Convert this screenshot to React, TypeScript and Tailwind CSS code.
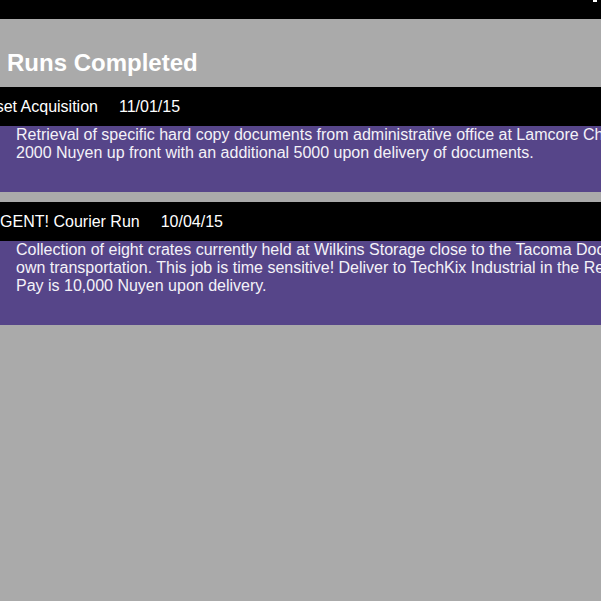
const runs = [
  {
    title: "Asset Acquisition",
    date: "11/01/15",
    lines: [
      "Retrieval of specific hard copy documents from administrative office at Lamcore Chemical.",
      "2000 Nuyen up front with an additional 5000 upon delivery of documents.",
    ],
  },
  {
    title: "URGENT! Courier Run",
    date: "10/04/15",
    lines: [
      "Collection of eight crates currently held at Wilkins Storage close to the Tacoma Docks. Provide your",
      "own transportation. This job is time sensitive! Deliver to TechKix Industrial in the Redmond Barrens.",
      "Pay is 10,000 Nuyen upon delivery.",
    ],
  },
];

function RunItem({ title, date, lines }: any) {
  return (
    <div className="mb-[10px]">
      <div className="flex h-[39px] items-center whitespace-nowrap bg-black text-[16px] leading-[18px]">
        <span className="-ml-[23px]">{title}</span>
        <span className="ml-[21px]">{date}</span>
      </div>
      <div className="whitespace-nowrap bg-[#564589] pb-[30px] pl-4 text-[16px] leading-[18px] text-[#f4f2f8]">
        {lines.map((l: string) => (
          <div key={l}>{l}</div>
        ))}
      </div>
    </div>
  );
}

export default function App() {
  return (
    <div className="min-h-[601px] w-full overflow-hidden bg-[#aaaaaa] font-['Liberation_Sans',Arial,sans-serif] text-white">
      <div className="flex h-[19px] justify-end bg-black pr-[4px]">
        <span className="h-[2px] w-[4px] bg-white" />
      </div>
      <h1 className="mb-[10px] pl-[7px] pt-[30px] text-[24px] font-bold leading-[28px]">
        Runs Completed
      </h1>
      {runs.map((r) => (
        <RunItem key={r.title} {...r} />
      ))}
    </div>
  );
}
